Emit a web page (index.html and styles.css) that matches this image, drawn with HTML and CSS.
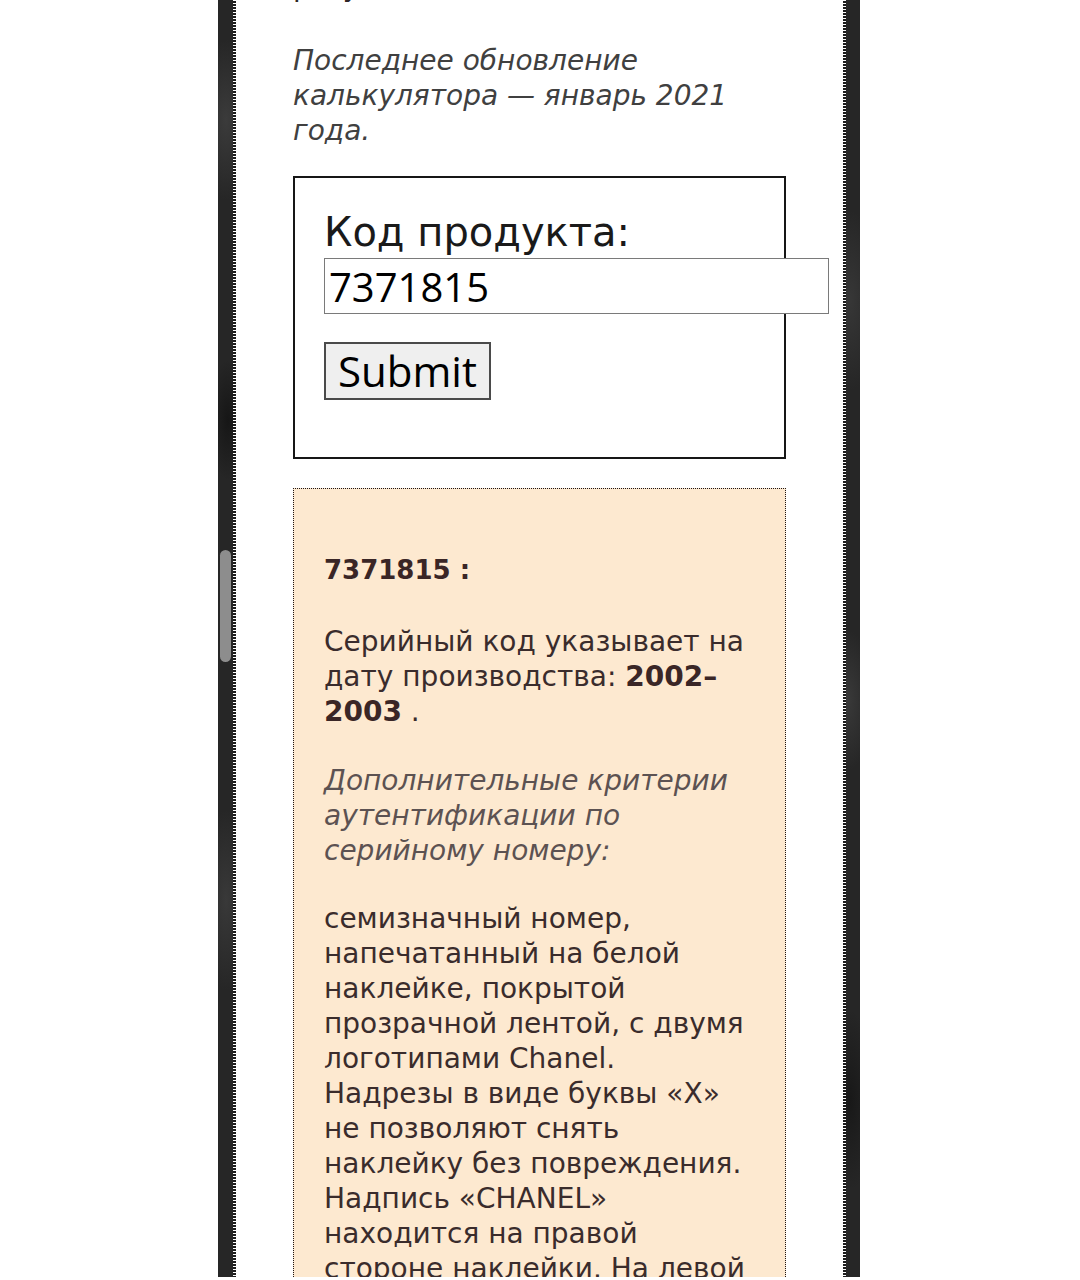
FILE: index.html
```html
<!DOCTYPE html>
<html lang="ru">
<head>
<meta charset="utf-8">
<title>Калькулятор серийного номера</title>
<link rel="stylesheet" href="styles.css">
</head>
<body>
<div class="frame">
  <div class="scroll-thumb"></div>
  <main class="page">
    <p class="cut">разу.</p>
    <p class="note">Последнее обновление калькулятора — январь 2021 года.</p>
    <form class="lookup">
      <label class="lookup-label" for="code">Код продукта:</label>
      <input id="code" class="lookup-input" type="text" value="7371815">
      <button class="lookup-submit" type="submit">Submit</button>
    </form>
    <section class="result">
      <h3 class="result-title">7371815 :</h3>
      <p class="result-text">Серийный код указывает на дату производства: <strong>2002–2003</strong> .</p>
      <p class="result-note">Дополнительные критерии аутентификации по серийному номеру:</p>
      <p class="result-text">семизначный номер, напечатанный на белой наклейке, покрытой прозрачной лентой, с двумя логотипами Chanel.<br>Надрезы в виде буквы «X» не позволяют снять наклейку без повреждения.<br>Надпись «CHANEL» находится на правой стороне наклейки. На левой стороне указан номер серии.</p>
    </section>
  </main>
</div>
</body>
</html>
```

FILE: styles.css
```css
html, body {
  margin: 0;
  padding: 0;
  background: #ffffff;
}

.frame {
  position: relative;
  box-sizing: border-box;
  width: 642px;
  height: 1277px;
  margin-left: 218px;
  padding: 0 17px 0 18px;
  overflow: hidden;
  background-color: #262626;
  background-image:
    radial-gradient(ellipse 30px 80px at 8px 120px, rgba(80,80,80,0.5), transparent),
    radial-gradient(ellipse 20px 60px at 10px 420px, rgba(15,15,15,0.7), transparent),
    radial-gradient(ellipse 30px 90px at 632px 300px, rgba(75,75,75,0.45), transparent),
    radial-gradient(ellipse 25px 70px at 630px 700px, rgba(80,80,80,0.45), transparent),
    radial-gradient(ellipse 25px 90px at 8px 900px, rgba(80,80,80,0.45), transparent),
    radial-gradient(ellipse 25px 90px at 632px 1100px, rgba(15,15,15,0.6), transparent);
}

.scroll-thumb {
  position: absolute;
  left: 2px;
  top: 550px;
  width: 11px;
  height: 112px;
  border-radius: 6px;
  background: #8d8d8d;
}

.page {
  position: relative;
  display: flow-root;
  height: 100%;
  padding: 0 57px;
  background: #ffffff;
  font-family: "DejaVu Sans", "Noto Sans", sans-serif;
  font-size: 28px;
  line-height: 35px;
  color: #2e2626;
}

.page::before,
.page::after {
  content: "";
  position: absolute;
  top: 0;
  bottom: 0;
  width: 3px;
  background: repeating-linear-gradient(to bottom, #ffffff 0 1px, #1c1c1c 1px 3px);
}

.page::before { left: -3px; }
.page::after { right: -3px; }

.cut {
  margin: -31px 0 39px;
}

.note {
  margin: 0 0 28px;
  font-style: italic;
  font-weight: 300;
  color: #404040;
}

.lookup {
  border: 2px solid #161616;
  padding: 30px 29px 57px;
}

.lookup-label {
  display: block;
  margin-bottom: 2px;
  font-size: 40px;
  line-height: 48px;
  color: #1a1a1a;
}

.lookup-input {
  display: block;
  box-sizing: border-box;
  width: 505px;
  height: 56px;
  margin: 0;
  padding: 0 4px;
  border: 1px solid #7a7a7a;
  background: #ffffff;
  font-family: "Open Sans", "Noto Sans", sans-serif;
  font-size: 40px;
  color: #000000;
}

.lookup-submit {
  display: block;
  box-sizing: border-box;
  height: 58px;
  margin: 28px 0 0;
  padding: 0 12px;
  border: 2px solid #4a4a4a;
  background: #efefef;
  font-family: "Open Sans", "Noto Sans", sans-serif;
  font-size: 42px;
  line-height: 52px;
  color: #000000;
}

.result {
  margin-top: 29px;
  padding: 64px 30px 40px;
  border: 1px dotted #1e1616;
  background: #fde9d0;
  color: #3a2c2c;
}

.result-title {
  margin: 0 0 36px;
  font-size: 26px;
  line-height: 35px;
  font-weight: 700;
  color: #3a2626;
}

.result-text {
  margin: 0 0 34px;
}

.result-text strong {
  font-weight: 700;
  color: #3a2626;
}

.result-note {
  margin: 0 0 33px;
  font-style: italic;
  font-weight: 300;
  color: #5c5252;
}
```
